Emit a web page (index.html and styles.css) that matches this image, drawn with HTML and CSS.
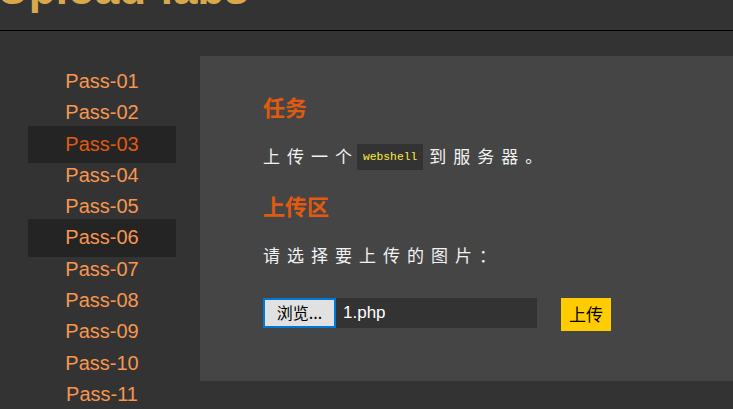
FILE: index.html
```html
<!DOCTYPE html>
<html lang="zh-CN">
<head>
<meta charset="utf-8">
<title>Upload-labs</title>
<link rel="stylesheet" href="styles.css">
</head>
<body>
<header class="top">
  <h1 class="logo">Upload-labs</h1>
</header>
<div class="main">
  <nav class="side">
    <ul class="menu">
      <li class="item">Pass-01</li>
      <li class="item">Pass-02</li>
      <li class="item active">Pass-03</li>
      <li class="item">Pass-04</li>
      <li class="item">Pass-05</li>
      <li class="item hover">Pass-06</li>
      <li class="item">Pass-07</li>
      <li class="item">Pass-08</li>
      <li class="item">Pass-09</li>
      <li class="item">Pass-10</li>
      <li class="item">Pass-11</li>
    </ul>
  </nav>
  <section class="panel">
    <h2 class="title first">任务</h2>
    <p class="text">上传一个<code class="code">webshell</code>到服务器。</p>
    <h2 class="title">上传区</h2>
    <p class="text">请选择要上传的图片：</p>
    <div class="form">
      <div class="file">
        <span class="browse">浏览...</span>
        <span class="fname">1.php</span>
      </div>
      <span class="submit">上传</span>
    </div>
  </section>
</div>
</body>
</html>
```

FILE: styles.css
```css
html, body {
  margin: 0;
  padding: 0;
}
body {
  background: #333333;
  font-family: "Liberation Sans", "Noto Sans CJK SC", sans-serif;
  width: 733px;
  height: 409px;
  overflow: hidden;
}
.top {
  height: 30px;
  border-bottom: 1px solid #000;
  overflow: hidden;
}
.logo {
  margin: -33px 0 0 -3px;
  font-size: 44px;
  line-height: 44px;
  font-weight: bold;
  color: #d8a94a;
  white-space: nowrap;
}
.main {
  display: flex;
  align-items: flex-start;
}
.side {
  width: 200px;
  flex: none;
}
.menu {
  list-style: none;
  margin: 0;
  padding: 35px 0 0 28px;
}
.item {
  width: 148px;
  height: 31.3px;
  line-height: 31.3px;
  text-align: center;
  font-size: 20px;
  color: #f7964f;
}
.item.active {
  color: #e05a10;
  background: #242424;
  padding: 3px 0;
  margin: -3px 0;
}
.item.hover {
  background: #242424;
  padding: 3px 0;
  margin: -3px 0;
}
.panel {
  flex: 1;
  margin-top: 25px;
  height: 325px;
  box-sizing: border-box;
  background: #454545;
  padding: 35px 0 0 63px;
}
.title {
  margin: 0;
  font-family: "Noto Sans CJK SC", sans-serif;
  font-size: 22px;
  line-height: 30px;
  font-weight: bold;
  color: #e05a10;
}
.title + .text {
  margin-top: 23px;
}
.text + .title {
  margin-top: 20px;
}
.text {
  margin: 0;
  font-family: "Noto Sans CJK SC", sans-serif;
  font-size: 17px;
  line-height: 24px;
  letter-spacing: 7px;
  color: #f2f2f2;
}
.code {
  display: inline-block;
  vertical-align: middle;
  margin: -2px 6px 0 -2px;
  padding: 0 6px;
  height: 26px;
  line-height: 26px;
  background: #333333;
  color: #ffeb3b;
  font-family: "Liberation Mono", monospace;
  font-size: 11.3px;
  letter-spacing: 0;
}
.form {
  display: flex;
  align-items: flex-start;
  margin-top: 31px;
}
.file {
  display: flex;
  align-items: center;
  width: 274px;
  height: 30px;
  background: #333333;
}
.browse {
  box-sizing: border-box;
  width: 73px;
  height: 30px;
  border: 2px solid #0078d7;
  background: #e1e1e1;
  color: #000;
  font-family: "Noto Sans CJK SC", sans-serif;
  font-size: 16px;
  line-height: 25px;
  text-align: center;
}
.fname {
  margin-left: 7px;
  color: #ffffff;
  font-size: 17px;
}
.submit {
  margin-left: 24px;
  width: 50px;
  height: 33px;
  background: #ffcc00;
  color: #000;
  font-family: "Noto Sans CJK SC", sans-serif;
  font-size: 17px;
  line-height: 32px;
  text-align: center;
}
```
